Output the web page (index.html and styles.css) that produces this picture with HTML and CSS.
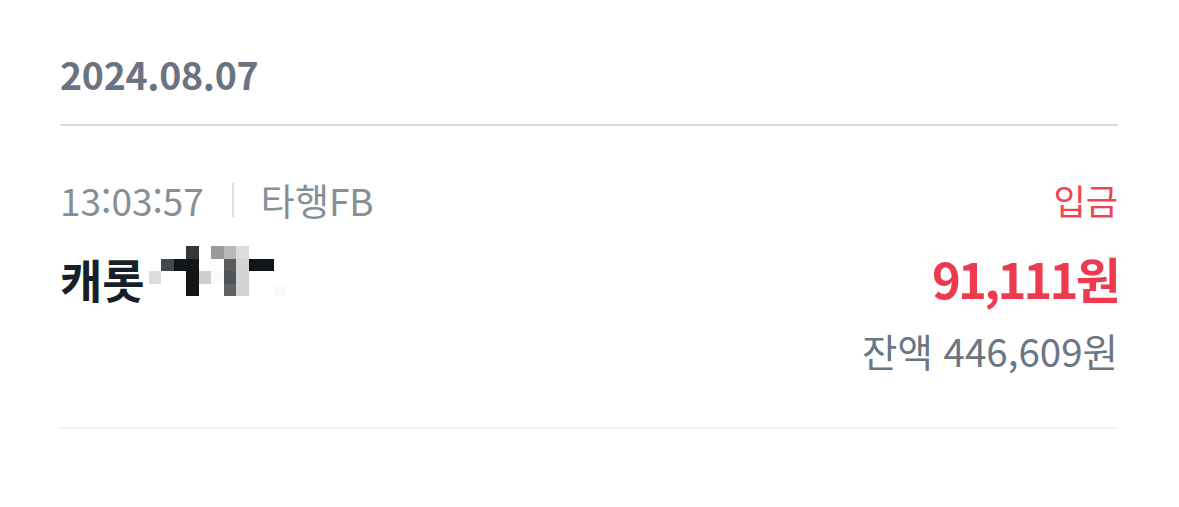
FILE: index.html
```html
<!DOCTYPE html>
<html lang="ko">
<head>
<meta charset="utf-8">
<link rel="stylesheet" href="styles.css">
</head>
<body>
<div class="page">
  <div class="date-head">2024.08.07</div>
  <div class="tx">
    <div class="tx-row">
      <div class="meta"><span class="time">13:03:57</span><span class="sep"></span><span class="bank">타행FB</span></div>
      <div class="kind">입금</div>
    </div>
    <div class="tx-row main">
      <div class="name"><span>캐롯</span>
        <div class="mosaic">
          <i></i><i></i><i></i><i class="m1"></i><i></i><i class="m2"></i><i class="m3"></i><i class="m4"></i><i></i><i></i><i></i>
          <i></i><i class="m5"></i><i class="k"></i><i class="k"></i><i></i><i></i><i class="m6"></i><i class="m7"></i><i class="k"></i><i class="k"></i><i></i>
          <i class="m4"></i><i></i><i></i><i class="k"></i><i class="m8"></i><i class="m9"></i><i class="m10"></i><i class="m7"></i><i></i><i></i><i></i>
          <i></i><i></i><i></i><i class="k"></i><i></i><i></i><i class="m11"></i><i class="m7"></i><i></i><i></i><i class="m9"></i>
        </div>
      </div>
      <div class="amount">91,111원</div>
    </div>
    <div class="tx-row">
      <div></div>
      <div class="balance">잔액 446,609원</div>
    </div>
  </div>
</div>
</body>
</html>
```
FILE: styles.css
```css
* { box-sizing: border-box; }
html, body { margin: 0; background: #ffffff; }
body { font-family: "Noto Sans CJK KR", "Noto Sans", sans-serif; }
.page { padding: 0 61px 0 60px; }
.date-head {
  padding-top: 50px;
  padding-bottom: 26px;
  height: 126px;
  font-size: 37.5px;
  line-height: 48px;
  font-weight: 700;
  color: #6b7280;
  letter-spacing: -0.3px;
  border-bottom: 2px solid #d5dae0;
}
.tx {
  padding: 52px 0 55px;
  border-bottom: 2px solid #f2f4f6;
}
.tx-row { display: flex; justify-content: space-between; align-items: center; }
.meta { display: flex; align-items: center; font-size: 37px; line-height: 44px; color: #868e96; }
.sep { width: 2px; height: 34px; background: #dde2e8; margin: 0 27px 0 28px; }
.kind { font-size: 35px; line-height: 44px; color: #f04452; }
.main { margin-top: 28px; }
.name { display: flex; align-items: center; font-size: 46px; line-height: 56px; font-weight: 700; color: #191f28; letter-spacing: 0; }
.mosaic {
  display: grid;
  grid-template-columns: repeat(11, 12.5px);
  grid-template-rows: repeat(4, 12.5px);
  margin-left: 4px;
  margin-top: -14px;
}
.mosaic i { display: block; }
.mosaic .k { background: #121518; }
.mosaic .m1 { background: #35383b; }
.mosaic .m2 { background: #9a9a9a; }
.mosaic .m3 { background: #b8b8b8; }
.mosaic .m4 { background: #dcdcdc; }
.mosaic .m5 { background: #45484b; }
.mosaic .m6 { background: #5a5d60; }
.mosaic .m7 { background: #d4d4d4; }
.mosaic .m8 { background: #cfcfcf; }
.mosaic .m9 { background: #fafafa; }
.mosaic .m10 { background: #505356; }
.mosaic .m11 { background: #5f6265; }
.amount { font-size: 49px; line-height: 56px; font-weight: 700; color: #ee3a4f; letter-spacing: -2.8px; }
.balance { margin-top: 22px; font-size: 38.5px; line-height: 44px; color: #6b7684; }
```
